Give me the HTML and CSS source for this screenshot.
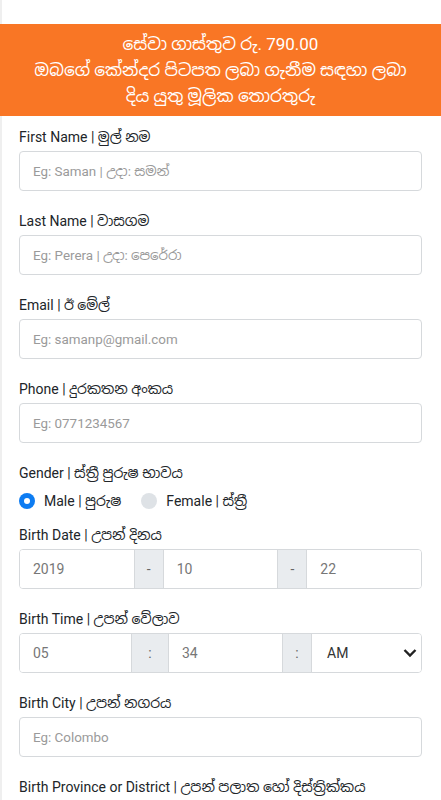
FILE: index.html
```html
<!DOCTYPE html>
<html>
<head>
<meta charset="utf-8">
<link rel="stylesheet" href="styles.css">
</head>
<body>
<div class="page">
  <div class="topgap"></div>
  <div class="banner">
    <div>සේවා ගාස්තුව රු. 790.00</div>
    <div>ඔබගේ කේන්දර පිටපත ලබා ගැනීම සඳහා ලබා</div>
    <div>දිය යුතු මූලික තොරතුරු</div>
  </div>
  <form class="form">
    <div class="field">
      <label class="label">First Name | මුල් නම</label>
      <input class="input" type="text" placeholder="Eg: Saman | උදා: සමන්">
    </div>
    <div class="field">
      <label class="label">Last Name | වාසගම</label>
      <input class="input" type="text" placeholder="Eg: Perera | උදා: පෙරේරා">
    </div>
    <div class="field">
      <label class="label">Email | ඊ මේල්</label>
      <input class="input" type="text" placeholder="Eg: samanp@gmail.com">
    </div>
    <div class="field">
      <label class="label">Phone | දුරකතන අංකය</label>
      <input class="input" type="text" placeholder="Eg: 0771234567">
    </div>
    <div class="field gender">
      <label class="label">Gender | ස්ත්‍රී පුරුෂ භාවය</label>
      <div class="radios">
        <span class="radio checked"></span><span class="rlabel">Male | පුරුෂ</span>
        <span class="radio"></span><span class="rlabel">Female | ස්ත්‍රී</span>
      </div>
    </div>
    <div class="field">
      <label class="label">Birth Date | උපන් දිනය</label>
      <div class="group">
        <div class="cell c-date">2019</div>
        <div class="addon a-date">-</div>
        <div class="cell c-date">10</div>
        <div class="addon a-date">-</div>
        <div class="cell c-date">22</div>
      </div>
    </div>
    <div class="field">
      <label class="label">Birth Time | උපන් වේලාව</label>
      <div class="group">
        <div class="cell c-hour">05</div>
        <div class="addon a-time1">:</div>
        <div class="cell c-min">34</div>
        <div class="addon a-time2">:</div>
        <div class="cell c-ampm">AM
          <svg class="chev" width="14" height="10" viewBox="0 0 14 10"><path d="M1.5 2l5.5 5.5L12.5 2" fill="none" stroke="#222" stroke-width="2.4"/></svg>
        </div>
      </div>
    </div>
    <div class="field">
      <label class="label">Birth City | උපන් නගරය</label>
      <input class="input" type="text" placeholder="Eg: Colombo">
    </div>
    <div class="field">
      <label class="label">Birth Province or District | උපන් පලාත හෝ දිස්ත්‍රික්කය</label>
      <input class="input" type="text">
    </div>
  </form>
</div>
</body>
</html>
```

FILE: styles.css
```css
* { box-sizing: border-box; }
html, body { margin: 0; padding: 0; background: #fff; }
body {
  font-family: Roboto, "Noto Sans", "Noto Sans Sinhala", "Liberation Sans", sans-serif;
  color: #212529;
}
.page {
  border-left: 2px solid #efefef;
  min-height: 800px;
}
.topgap { height: 24px; }
.banner {
  background: #f97625;
  color: #fff;
  text-align: center;
  font-size: 17px;
  line-height: 26px;
  padding: 7px 10px;
  margin-left: -2px;
}
.form {
  padding: 11px 19px 0 17px;
}
.field { margin-bottom: 20px; }
.label {
  display: block;
  font-size: 14px;
  line-height: 20px;
  margin-bottom: 4px;
  white-space: nowrap;
}
.input {
  display: block;
  width: 100%;
  height: 40px;
  border: 1px solid #d6d9dc;
  border-radius: 4px;
  padding: 0 13px;
  font-family: inherit;
  font-size: 13.4px;
  color: #495057;
  background: #fff;
  outline: none;
}
.input::placeholder { color: #9a9a9a; }
.gender { margin-bottom: 12px; }
.radios {
  display: flex;
  align-items: center;
  height: 24px;
  margin-top: 6px;
  font-size: 14px;
}
.radio {
  width: 16px;
  height: 16px;
  border-radius: 50%;
  background: #dee2e6;
  margin-right: 9px;
  flex: none;
}
.radio.checked {
  background: #0d7cf2;
  position: relative;
}
.radio.checked::after {
  content: "";
  position: absolute;
  left: 5px; top: 5px;
  width: 6px; height: 6px;
  border-radius: 50%;
  background: #fff;
}
.rlabel { margin-right: 20px; }
.group {
  display: flex;
  height: 40px;
  border: 1px solid #d6d9dc;
  border-radius: 4px;
  overflow: hidden;
  font-size: 14px;
  color: #777;
}
.cell {
  display: flex;
  align-items: center;
  padding: 0 13px;
  background: #fff;
}
.addon {
  display: flex;
  align-items: center;
  justify-content: center;
  background: #e9ecef;
  border-left: 1px solid #d6d9dc;
  border-right: 1px solid #d6d9dc;
  color: #666;
}
.c-date { flex: 1; }
.a-date { width: 30px; }
.c-hour { width: 111px; }
.a-time1 { width: 38px; }
.c-min { width: 113px; }
.a-time2 { width: 30px; }
.c-ampm {
  flex: 1;
  justify-content: space-between;
  color: #333;
  padding: 0 4px 0 15px;
}
.chev { flex: none; }
```
